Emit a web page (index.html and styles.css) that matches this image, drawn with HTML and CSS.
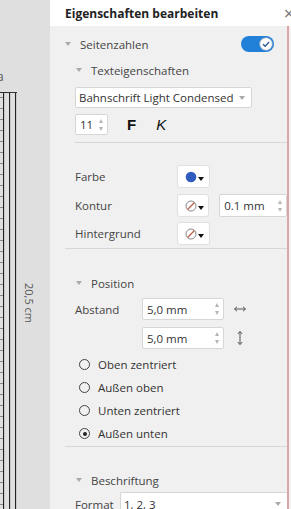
FILE: index.html
```html
<!DOCTYPE html>
<html lang="de">
<head>
  <meta charset="UTF-8">
  <title>Eigenschaften bearbeiten</title>
  <link rel="stylesheet" href="styles.css">
</head>
<body>
  <div class="app">
    <!-- page preview, cut off at the left -->
    <div class="canvas">
      <span class="cut-label">a</span>
      <div class="ruler"></div>
      <div class="size-label">20,5 cm</div>
    </div>

    <div class="panel">
      <header class="panel-head">
        <h1>Eigenschaften bearbeiten</h1>
        <span class="close">&times;</span>
      </header>

      <div class="panel-body">
        <div class="content">
          <div class="head-row top">
            <span class="caret"></span>
            <span class="head-text">Seitenzahlen</span>
            <span class="toggle">
              <svg class="knob" width="14" height="14" viewBox="0 0 14 14">
                <circle cx="7" cy="7" r="6.3" fill="#fff" stroke="#9ab" stroke-width="0.8"/>
                <path d="M4 7.2 L6.2 9.3 L10.2 4.9" fill="none" stroke="#2b5a94" stroke-width="1.4"/>
              </svg>
            </span>
          </div>

          <div class="head-row sub text-head">
            <span class="caret"></span>
            <span class="head-text">Texteigenschaften</span>
          </div>

          <div class="select font-select">
            <span>Bahnschrift Light Condensed</span>
            <span class="caret"></span>
          </div>

          <div class="font-row">
            <div class="input size-input">
              <span>11</span>
              <span class="spin"><i class="up"></i><i class="down"></i></span>
            </div>
            <span class="bold-btn">F</span>
            <span class="italic-btn">K</span>
          </div>

          <div class="divider inner"></div>

          <div class="field-row farbe">
            <span class="label">Farbe</span>
            <span class="swatch">
              <svg width="14" height="14" viewBox="0 0 14 14"><circle cx="7" cy="7" r="5.3" fill="#2f5cbe"/></svg>
              <span class="drop"></span>
            </span>
          </div>

          <div class="field-row kontur">
            <span class="label">Kontur</span>
            <span class="swatch">
              <svg width="14" height="14" viewBox="0 0 14 14"><circle cx="7" cy="7" r="5" fill="none" stroke="#8a8a8a" stroke-width="1"/><line x1="3.6" y1="10.4" x2="10.4" y2="3.6" stroke="#c0674f" stroke-width="1.4"/></svg>
              <span class="drop"></span>
            </span>
            <div class="input width-input">
              <span>0.1 mm</span>
              <span class="spin"><i class="up"></i><i class="down"></i></span>
            </div>
          </div>

          <div class="field-row hinter">
            <span class="label">Hintergrund</span>
            <span class="swatch">
              <svg width="14" height="14" viewBox="0 0 14 14"><circle cx="7" cy="7" r="5" fill="none" stroke="#8a8a8a" stroke-width="1"/><line x1="3.6" y1="10.4" x2="10.4" y2="3.6" stroke="#c0674f" stroke-width="1.4"/></svg>
              <span class="drop"></span>
            </span>
          </div>

          <div class="divider outer"></div>

          <div class="head-row sub pos-head">
            <span class="caret"></span>
            <span class="head-text">Position</span>
          </div>

          <div class="dist-row first">
            <span class="label">Abstand</span>
            <div class="input dist-input">
              <span>5,0 mm</span>
              <span class="spin"><i class="up"></i><i class="down"></i></span>
            </div>
            <svg class="dir" width="14" height="14" viewBox="0 0 14 14"><path d="M1.5 7 H12.5 M4 4.8 L1.5 7 L4 9.2 M10 4.8 L12.5 7 L10 9.2" fill="none" stroke="#555" stroke-width="1"/></svg>
          </div>

          <div class="dist-row second">
            <span class="label"></span>
            <div class="input dist-input">
              <span>5,0 mm</span>
              <span class="spin"><i class="up"></i><i class="down"></i></span>
            </div>
            <svg class="dir" width="14" height="16" viewBox="0 0 14 16"><path d="M7 1.5 V14.5 M4.8 4 L7 1.5 L9.2 4 M4.8 12 L7 14.5 L9.2 12" fill="none" stroke="#555" stroke-width="1"/></svg>
          </div>

          <div class="radios">
            <label class="radio"><span class="dot"></span>Oben zentriert</label>
            <label class="radio"><span class="dot"></span>Außen oben</label>
            <label class="radio"><span class="dot"></span>Unten zentriert</label>
            <label class="radio"><span class="dot on"></span>Außen unten</label>
          </div>

          <div class="divider outer last"></div>

          <div class="head-row sub label-head">
            <span class="caret"></span>
            <span class="head-text">Beschriftung</span>
          </div>

          <div class="format-row">
            <span class="label">Format</span>
            <div class="select format-select">
              <span>1, 2, 3</span>
              <span class="caret"></span>
            </div>
          </div>
        </div>
        <div class="edge"></div>
      </div>
    </div>
  </div>
</body>
</html>
```

FILE: styles.css
```css
body {
  margin: 0;
  font-family: "Open Sans", "Noto Sans", sans-serif;
  font-size: 11.5px;
  color: #444;
}
.app {
  display: flex;
  height: 509px;
  overflow: hidden;
}

/* left: page preview */
.canvas {
  position: relative;
  width: 50px;
  flex-shrink: 0;
  background: #dfdfdf;
}
.cut-label {
  position: absolute;
  left: -3px;
  top: 68px;
  font-size: 12px;
  color: #555;
}
.ruler {
  position: absolute;
  left: 0;
  top: 92px;
  width: 17px;
  bottom: 0;
  border-top: 1px solid #333;
  background:
    repeating-linear-gradient(180deg, #888 0 1px, transparent 1px 11px) 0 4px / 3px 100% no-repeat,
    repeating-linear-gradient(90deg, transparent 0 3px, #222 3px 4px, #c8c8c8 4px 5px, transparent 5px 6px);
}
.size-label {
  position: absolute;
  left: 22px;
  top: 283px;
  writing-mode: vertical-rl;
  font-size: 11px;
  color: #555;
}

/* right: properties panel */
.panel {
  flex: 1;
  min-width: 0;
  background: #f0f0f0;
  display: flex;
  flex-direction: column;
}
.panel-head {
  height: 26px;
  background: #fff;
  display: flex;
  align-items: center;
  justify-content: space-between;
  padding-left: 15px;
  flex-shrink: 0;
}
.panel-head h1 {
  margin: 0;
  font-size: 12px;
  font-weight: bold;
  color: #222;
}
.close {
  font-size: 18px;
  color: #777;
  margin-right: -3px;
  line-height: 1;
}
.panel-body {
  flex: 1;
  display: flex;
  min-height: 0;
}
.content {
  width: 237px;
  flex-shrink: 0;
  overflow: hidden;
}
.edge {
  flex: 1;
  border-left: 2px solid #d9a8a6;
  background: #f4f2f2;
}

/* section headers */
.head-row {
  display: flex;
  align-items: center;
  height: 22px;
  gap: 9px;
}
.head-row.top {
  margin-top: 7px;
  padding-left: 15px;
}
.head-row.sub {
  padding-left: 26px;
}
.text-head { margin-top: 4px; }
.pos-head { margin-top: 23px; }
.label-head { margin-top: 22px; }
.caret {
  width: 0;
  height: 0;
  border-left: 3px solid transparent;
  border-right: 3px solid transparent;
  border-top: 4px solid #aaa;
}
.head-text {
  color: #444;
}
.toggle {
  margin-left: auto;
  margin-right: 13px;
  width: 33px;
  height: 16px;
  border-radius: 8px;
  background: #2180d8;
  display: flex;
  align-items: center;
  justify-content: flex-end;
  padding-right: 1px;
  box-sizing: border-box;
}

/* inputs */
.select, .input {
  background: #fff;
  border: 1px solid #d6d6d6;
  border-radius: 2px;
  box-sizing: border-box;
  display: flex;
  align-items: center;
  color: #333;
}
.select {
  justify-content: space-between;
  padding: 0 6px 0 3px;
}
.font-select {
  margin: 6px 0 0 25px;
  width: 177px;
  height: 21px;
}
.spin {
  margin-left: auto;
  display: flex;
  flex-direction: column;
  gap: 4px;
}
.spin i {
  width: 0;
  height: 0;
  border-left: 2.5px solid transparent;
  border-right: 2.5px solid transparent;
}
.spin .up { border-bottom: 4px solid #b5b5b5; }
.spin .down { border-top: 4px solid #b5b5b5; }
.input {
  padding: 0 4px 0 4px;
}

.font-row {
  display: flex;
  align-items: center;
  margin: 6px 0 0 25px;
  height: 21px;
}
.size-input {
  width: 33px;
  height: 21px;
}
.bold-btn {
  margin-left: 19px;
  font-family: "Liberation Sans", sans-serif;
  font-weight: bold;
  font-size: 15px;
  color: #111;
}
.italic-btn {
  margin-left: 20px;
  font-family: "Liberation Sans", sans-serif;
  font-style: italic;
  font-size: 15px;
  color: #111;
}

.divider {
  height: 1px;
  background: #d6d6d6;
}
.divider.inner { margin: 7px 0 0 25px; }
.divider.outer { margin: 3px 0 0 15px; }
.divider.last { margin-top: 1px; }

/* colour rows */
.field-row {
  display: flex;
  align-items: center;
  padding-left: 25px;
  height: 23px;
}
.farbe { margin-top: 22px; }
.kontur { margin-top: 6px; }
.hinter { margin-top: 5px; }
.label {
  width: 102px;
  flex-shrink: 0;
}
.swatch {
  width: 33px;
  height: 23px;
  background: #fff;
  border: 1px solid #e0e0e0;
  border-radius: 3px;
  box-sizing: border-box;
  display: flex;
  align-items: center;
  padding-left: 6px;
  gap: 0;
}
.drop {
  align-self: flex-end;
  margin-bottom: 6px;
  width: 0;
  height: 0;
  border-left: 3px solid transparent;
  border-right: 3px solid transparent;
  border-top: 4px solid #111;
}
.width-input {
  margin-left: 10px;
  width: 70px;
  height: 23px;
}

/* position */
.dist-row {
  display: flex;
  align-items: center;
  padding-left: 25px;
  height: 22px;
}
.dist-row .label { width: 67px; }
.dist-row.first { margin-top: 4px; }
.dist-row.second { margin-top: 7px; }
.dist-input {
  width: 82px;
  height: 22px;
}
.dir {
  margin-left: 9px;
}

.radios {
  margin-top: 4px;
}
.radio {
  display: flex;
  align-items: center;
  gap: 8px;
  height: 23px;
  padding-left: 29px;
  color: #333;
}
.dot {
  width: 11px;
  height: 11px;
  border: 1px solid #444;
  border-radius: 50%;
  box-sizing: border-box;
  position: relative;
}
.dot.on::after {
  content: "";
  position: absolute;
  left: 2.5px;
  top: 2.5px;
  width: 4px;
  height: 4px;
  border-radius: 50%;
  background: #222;
}

.format-row {
  display: flex;
  align-items: center;
  padding-left: 25px;
  margin-top: 1px;
  height: 24px;
}
.format-row .label { width: 45px; }
.format-select {
  flex: 1;
  height: 24px;
  border-right: none;
}
```
